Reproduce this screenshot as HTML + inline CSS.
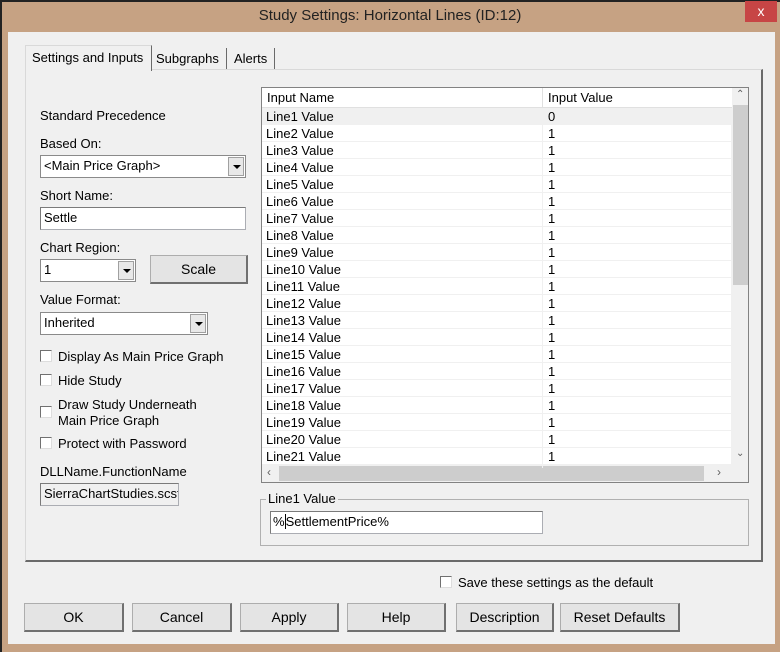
<!DOCTYPE html>
<html><head><style>
*{margin:0;padding:0;box-sizing:border-box}
body{width:780px;height:652px;background:#c6a283;position:relative;overflow:hidden;font-family:"Liberation Sans",sans-serif;font-size:13px;color:#000}
.a{position:absolute}
.body{left:8px;top:32px;width:767px;height:612px;background:#f0f0f0}
.lbl{position:absolute;font-size:13px}
.edit{position:absolute;background:#fff;border:1px solid #abadb3;border-top-color:#7a7a7a;border-left-color:#7a7a7a;padding:2px 3px;font-size:13px;line-height:16px}
.dd{position:absolute;background:#fff;border:1px solid #8a8a8a;padding:2px 3px;font-size:13px;line-height:16px}
.dd b{position:absolute;right:1px;top:1px;bottom:1px;width:16px;background:#e8e8e8;border:1px solid #a0a0a0}
.dd b:after{content:"";position:absolute;left:4px;top:7px;border-left:4px solid transparent;border-right:4px solid transparent;border-top:4px solid #000}
.btn{position:absolute;background:#e4e4e4;border:1px solid #adadad;border-right:2px solid #707070;border-bottom:2px solid #707070;text-align:center;font-size:14px;line-height:26px}
.cb{position:absolute;width:12px;height:12px;background:#fff;border:1px solid #707070;border-right-color:#ddd;border-bottom-color:#ddd}
.row{height:17px;line-height:17px;border-bottom:1px solid #f0f0f0;position:relative;background:#fff}
.row span{position:absolute;left:4px;top:0}
.row i{font-style:normal;position:absolute;left:286px;top:0}
</style></head><body>
<div class="a" style="left:0;top:0;width:780px;height:2px;background:#222"></div>
<div class="a" style="left:0;top:0;width:2px;height:652px;background:#222"></div>
<div class="a" style="left:0;top:7px;width:780px;text-align:center;font-size:15px;color:#222">Study Settings: Horizontal Lines (ID:12)</div>
<div class="a" style="left:745px;top:1px;width:32px;height:21px;background:#c74545;color:#fff;text-align:center;font-size:14px;line-height:21px">x</div>
<div class="a body"></div>

<div class="a" style="left:25px;top:69px;width:738px;height:493px;border:1px solid #d9d9d9;border-right:2px solid #6a6a6a;border-bottom:2px solid #6a6a6a;background:#f0f0f0"></div>
<div class="a" style="left:25px;top:45px;width:127px;height:26px;border:1px solid #d9d9d9;border-right:1px solid #6a6a6a;border-bottom:none;background:#f0f0f0;padding:4px 6px;font-size:13px">Settings and Inputs</div>
<div class="a" style="left:152px;top:48px;width:75px;height:21px;border-right:1px solid #6a6a6a;padding:3px 4px;font-size:13px">Subgraphs</div>
<div class="a" style="left:228px;top:48px;width:47px;height:21px;border-right:1px solid #6a6a6a;padding:3px 6px;font-size:13px">Alerts</div>

<div class="lbl" style="left:40px;top:108px">Standard Precedence</div>
<div class="lbl" style="left:40px;top:136px">Based On:</div>
<div class="dd" style="left:40px;top:155px;width:206px;height:23px">&lt;Main Price Graph&gt;<b></b></div>
<div class="lbl" style="left:40px;top:188px">Short Name:</div>
<div class="edit" style="left:40px;top:207px;width:206px;height:23px">Settle</div>
<div class="lbl" style="left:40px;top:240px">Chart Region:</div>
<div class="dd" style="left:40px;top:259px;width:96px;height:23px">1<b></b></div>
<div class="btn" style="left:150px;top:255px;width:98px;height:29px;font-size:14px">Scale</div>
<div class="lbl" style="left:40px;top:292px">Value Format:</div>
<div class="dd" style="left:40px;top:312px;width:168px;height:23px">Inherited<b></b></div>
<div class="cb" style="left:40px;top:350px"></div><div class="lbl" style="left:58px;top:349px">Display As Main Price Graph</div>
<div class="cb" style="left:40px;top:374px"></div><div class="lbl" style="left:58px;top:373px">Hide Study</div>
<div class="cb" style="left:40px;top:406px"></div><div class="lbl" style="left:58px;top:397px;line-height:16px">Draw Study Underneath<br>Main Price Graph</div>
<div class="cb" style="left:40px;top:437px"></div><div class="lbl" style="left:58px;top:436px">Protect with Password</div>
<div class="lbl" style="left:40px;top:464px">DLLName.FunctionName</div>
<div class="edit" style="left:40px;top:483px;width:139px;height:23px;background:#f0f0f0;overflow:hidden;white-space:nowrap">SierraChartStudies.scsf</div>

<div class="a" style="left:261px;top:87px;width:488px;height:396px;border:1px solid #828282;background:#f0f0f0;overflow:hidden">
 <div style="height:20px;line-height:20px;background:#fff;border-bottom:1px solid #e0e0e0;position:relative">
  <span style="position:absolute;left:5px">Input Name</span>
  <span style="position:absolute;left:280px;top:0;height:20px;border-left:1px solid #e0e0e0"></span>
  <span style="position:absolute;left:286px">Input Value</span>
 </div>
 <div style="width:469px;position:relative">
  <div style="position:absolute;left:280px;top:0;height:360px;border-left:1px solid #f0f0f0;z-index:2"></div>
  <div class="row" style="background:#f0f0f0"><span>Line1 Value</span><i>0</i></div>
  <div class="row"><span>Line2 Value</span><i>1</i></div>
  <div class="row"><span>Line3 Value</span><i>1</i></div>
  <div class="row"><span>Line4 Value</span><i>1</i></div>
  <div class="row"><span>Line5 Value</span><i>1</i></div>
  <div class="row"><span>Line6 Value</span><i>1</i></div>
  <div class="row"><span>Line7 Value</span><i>1</i></div>
  <div class="row"><span>Line8 Value</span><i>1</i></div>
  <div class="row"><span>Line9 Value</span><i>1</i></div>
  <div class="row"><span>Line10 Value</span><i>1</i></div>
  <div class="row"><span>Line11 Value</span><i>1</i></div>
  <div class="row"><span>Line12 Value</span><i>1</i></div>
  <div class="row"><span>Line13 Value</span><i>1</i></div>
  <div class="row"><span>Line14 Value</span><i>1</i></div>
  <div class="row"><span>Line15 Value</span><i>1</i></div>
  <div class="row"><span>Line16 Value</span><i>1</i></div>
  <div class="row"><span>Line17 Value</span><i>1</i></div>
  <div class="row"><span>Line18 Value</span><i>1</i></div>
  <div class="row"><span>Line19 Value</span><i>1</i></div>
  <div class="row"><span>Line20 Value</span><i>1</i></div>
  <div class="row"><span>Line21 Value</span><i>1</i></div>
 </div>
 <div style="position:absolute;left:470px;top:0;width:17px;height:377px;background:#f0f0f0">
  <div style="position:absolute;left:1px;top:17px;width:15px;height:180px;background:#cdcdcd"></div>
  <div style="position:absolute;left:4px;top:1px;font-size:10px;color:#606060">&#8963;</div>
  <div style="position:absolute;left:4px;top:360px;font-size:10px;color:#606060">&#8964;</div>
 </div>
 <div style="position:absolute;left:0;top:377px;width:470px;height:17px;background:#f0f0f0">
  <div style="position:absolute;left:17px;top:1px;width:425px;height:15px;background:#cdcdcd"></div>
  <div style="position:absolute;left:5px;top:0;font-size:12px;color:#606060">&#8249;</div>
  <div style="position:absolute;left:455px;top:0;font-size:12px;color:#606060">&#8250;</div>
 </div>
</div>

<div class="a" style="left:260px;top:499px;width:489px;height:47px;border:1px solid #b0b0b0"></div>
<div class="lbl" style="left:266px;top:491px;background:#f0f0f0;padding:0 2px">Line1 Value</div>
<div class="edit" style="left:270px;top:511px;width:273px;height:23px;padding-left:2px">%<span style="border-left:1px solid #000">S</span>ettlementPrice%</div>

<div class="cb" style="left:440px;top:576px"></div>
<div class="lbl" style="left:458px;top:575px">Save these settings as the default</div>

<div class="btn" style="left:24px;top:603px;width:100px;height:29px">OK</div>
<div class="btn" style="left:132px;top:603px;width:100px;height:29px">Cancel</div>
<div class="btn" style="left:240px;top:603px;width:99px;height:29px">Apply</div>
<div class="btn" style="left:347px;top:603px;width:99px;height:29px">Help</div>
<div class="btn" style="left:456px;top:603px;width:98px;height:29px">Description</div>
<div class="btn" style="left:560px;top:603px;width:120px;height:29px">Reset Defaults</div>
</body></html>
